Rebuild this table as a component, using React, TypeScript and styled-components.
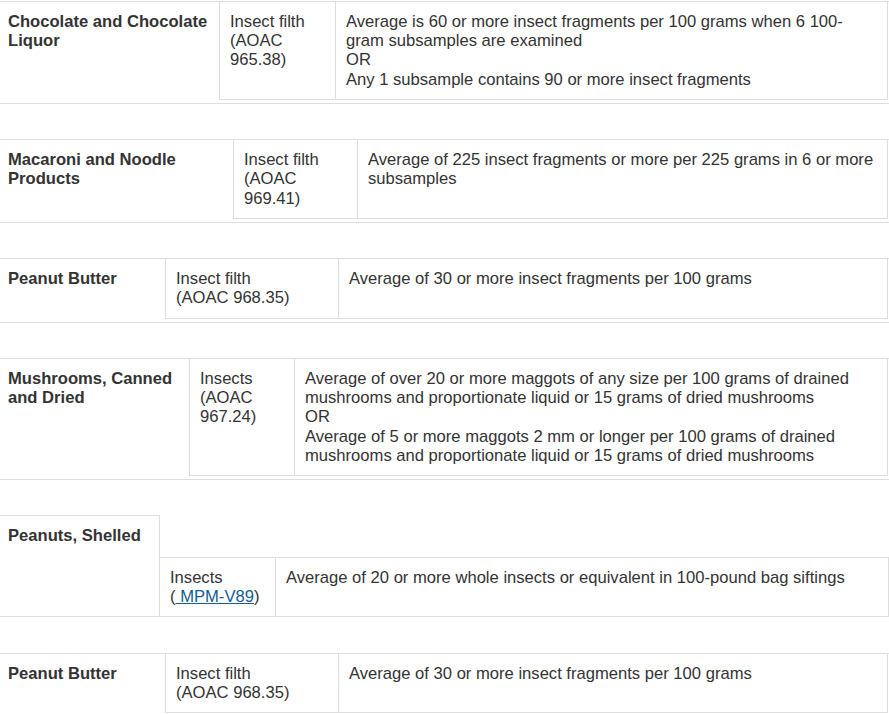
import React from "react";
import styled, { createGlobalStyle } from "styled-components";

const GlobalStyle = createGlobalStyle`
  html, body { margin: 0; padding: 0; background: #ffffff; }
  body {
    font-family: "Liberation Sans", Arial, Helvetica, sans-serif;
    font-size: 16.6px;
    line-height: 19.2px;
    color: #333333;
  }
`;

const Page = styled.main`
  display: flex;
  flex-direction: column;
  gap: 35.4px;
  width: 889px;
  padding-top: 1px;
`;

const Block = styled.section<{ $stacked?: boolean }>`
  display: flex;
  align-items: ${(p) => (p.$stacked ? "stretch" : "flex-start")};
  border-top: ${(p) => (p.$stacked ? "none" : "1px solid #dddddd")};
  border-bottom: 1px solid #dddddd;
`;

const NameCell = styled.div<{ $w: number; $boxed?: boolean }>`
  flex: 0 0 auto;
  box-sizing: border-box;
  width: ${(p) => p.$w}px;
  padding: 10px 8px;
  font-weight: bold;
  border-top: ${(p) => (p.$boxed ? "1px solid #dddddd" : "none")};
  border-right: ${(p) => (p.$boxed ? "1px solid #dddddd" : "none")};
`;

const RightColumn = styled.div`
  flex: 1 1 auto;
  display: flex;
  flex-direction: column;
`;

const EmptyHeaderRow = styled.div`
  height: 41.5px;
`;

const InnerTable = styled.div<{ $stacked?: boolean }>`
  flex: 1 1 auto;
  display: flex;
  border-left: ${(p) => (p.$stacked ? "none" : "1px solid #dddddd")};
  border-right: 1px solid #dddddd;
  border-top: ${(p) => (p.$stacked ? "1px solid #dddddd" : "none")};
  border-bottom: ${(p) => (p.$stacked ? "none" : "1px solid #dddddd")};
  margin-right: ${(p) => (p.$stacked ? 0 : 1)}px;
  margin-bottom: ${(p) => (p.$stacked ? 0 : 3)}px;
`;

const MethodCell = styled.div<{ $w: number }>`
  flex: 0 0 auto;
  box-sizing: border-box;
  width: ${(p) => p.$w}px;
  padding: 10px;
  border-right: 1px solid #dddddd;
`;

const CriteriaCell = styled.div`
  flex: 1 1 auto;
  padding: 10px;
`;

const Link = styled.a`
  color: #135e96;
  text-decoration: underline;
`;

type Row = {
  name: string;
  nameW: number;
  methodW: number;
  method: React.ReactNode;
  criteria: React.ReactNode;
};

const rows: Row[] = [
  {
    name: "Chocolate and Chocolate Liquor",
    nameW: 219,
    methodW: 116,
    method: (
      <>
        Insect filth
        <br />
        (AOAC 965.38)
      </>
    ),
    criteria: (
      <>
        Average is 60 or more insect fragments per 100 grams when 6 100-gram
        subsamples are examined
        <br />
        OR
        <br />
        Any 1 subsample contains 90 or more insect fragments
      </>
    ),
  },
  {
    name: "Macaroni and Noodle Products",
    nameW: 233,
    methodW: 124,
    method: (
      <>
        Insect filth
        <br />
        (AOAC 969.41)
      </>
    ),
    criteria: (
      <>
        Average of 225 insect fragments or more per 225 grams in 6 or more
        subsamples
      </>
    ),
  },
  {
    name: "Peanut Butter",
    nameW: 165,
    methodW: 173,
    method: (
      <>
        Insect filth
        <br />
        (AOAC 968.35)
      </>
    ),
    criteria: <>Average of 30 or more insect fragments per 100 grams</>,
  },
  {
    name: "Mushrooms, Canned and Dried",
    nameW: 189,
    methodW: 105,
    method: (
      <>
        Insects
        <br />
        (AOAC 967.24)
      </>
    ),
    criteria: (
      <>
        Average of over 20 or more maggots of any size per 100 grams of drained
        mushrooms and proportionate liquid or 15 grams of dried mushrooms
        <br />
        OR
        <br />
        Average of 5 or more maggots 2 mm or longer per 100 grams of drained
        mushrooms and proportionate liquid or 15 grams of dried mushrooms
      </>
    ),
  },
];

const lastRow: Row = rows[2];

function StandardBlock({ row }: { row: Row }) {
  return (
    <Block>
      <NameCell $w={row.nameW}>{row.name}</NameCell>
      <InnerTable>
        <MethodCell $w={row.methodW}>{row.method}</MethodCell>
        <CriteriaCell>{row.criteria}</CriteriaCell>
      </InnerTable>
    </Block>
  );
}

export default function App() {
  return (
    <>
      <GlobalStyle />
      <Page>
        {rows.map((r) => (
          <StandardBlock key={r.name} row={r} />
        ))}
        <Block $stacked>
          <NameCell $w={160} $boxed>
            Peanuts, Shelled
          </NameCell>
          <RightColumn>
            <EmptyHeaderRow />
            <InnerTable $stacked>
              <MethodCell $w={116}>
                Insects
                <br />(<Link href="#"> MPM-V89</Link>)
              </MethodCell>
              <CriteriaCell>
                Average of 20 or more whole insects or equivalent in 100-pound
                bag siftings
              </CriteriaCell>
            </InnerTable>
          </RightColumn>
        </Block>
        <StandardBlock row={lastRow} />
      </Page>
    </>
  );
}
